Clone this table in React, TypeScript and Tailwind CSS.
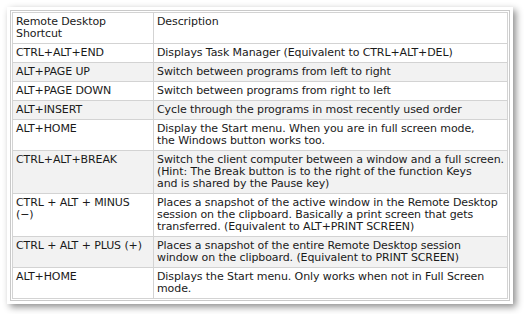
const rows: [string[], string[]][] = [
  [["CTRL+ALT+END"], ["Displays Task Manager (Equivalent to CTRL+ALT+DEL)"]],
  [["ALT+PAGE UP"], ["Switch between programs from left to right"]],
  [["ALT+PAGE DOWN"], ["Switch between programs from right to left"]],
  [["ALT+INSERT"], ["Cycle through the programs in most recently used order"]],
  [["ALT+HOME"], ["Display the Start menu. When you are in full screen mode,", "the Windows button works too."]],
  [
    ["CTRL+ALT+BREAK"],
    [
      "Switch the client computer between a window and a full screen.",
      "(Hint: The Break button is to the right of the function Keys",
      "and is shared by the Pause key)",
    ],
  ],
  [
    ["CTRL + ALT + MINUS", "(−)"],
    [
      "Places a snapshot of the active window in the Remote Desktop",
      "session on the clipboard. Basically a print screen that gets",
      "transferred. (Equivalent to ALT+PRINT SCREEN)",
    ],
  ],
  [
    ["CTRL + ALT + PLUS (+)"],
    ["Places a snapshot of the entire Remote Desktop session", "window on the clipboard. (Equivalent to PRINT SCREEN)"],
  ],
  [["ALT+HOME"], ["Displays the Start menu. Only works when not in Full Screen", "mode."]],
];

const cell = "border border-[#d3d3d3] align-top pl-[3px] pr-px pt-[3px] pb-[3px] whitespace-nowrap";

const Lines = ({ lines }: { lines: string[] }) => (
  <>
    {lines.map((l, i) => (
      <div key={i}>{l}</div>
    ))}
  </>
);

export default function App() {
  return (
    <div className="w-[527px] h-[314px] bg-white pt-[7px] pl-[7px] font-['DejaVu_Sans',Verdana,sans-serif] text-[11px] leading-[12px] tracking-[-0.1px] text-[#1a1a1a]">
      <div className="w-[506px] bg-white p-[3px] shadow-[3px_3px_7px_rgba(0,0,0,0.45)]">
        <div className="border border-[#c9c9c9] p-px">
          <table className="w-full table-fixed border-collapse">
            <colgroup>
              <col className="w-[141px]" />
              <col />
            </colgroup>
            <thead>
              <tr className="bg-white">
                <th className={`${cell} text-left font-normal`}>
                  <Lines lines={["Remote Desktop", "Shortcut"]} />
                </th>
                <th className={`${cell} text-left font-normal`}>Description</th>
              </tr>
            </thead>
            <tbody>
              {rows.map(([key, desc], i) => (
                <tr key={i} className={i % 2 === 1 ? "bg-[#f2f2f2]" : "bg-white"}>
                  <td className={cell}>
                    <Lines lines={key} />
                  </td>
                  <td className={cell}>
                    <Lines lines={desc} />
                  </td>
                </tr>
              ))}
            </tbody>
          </table>
        </div>
      </div>
    </div>
  );
}
